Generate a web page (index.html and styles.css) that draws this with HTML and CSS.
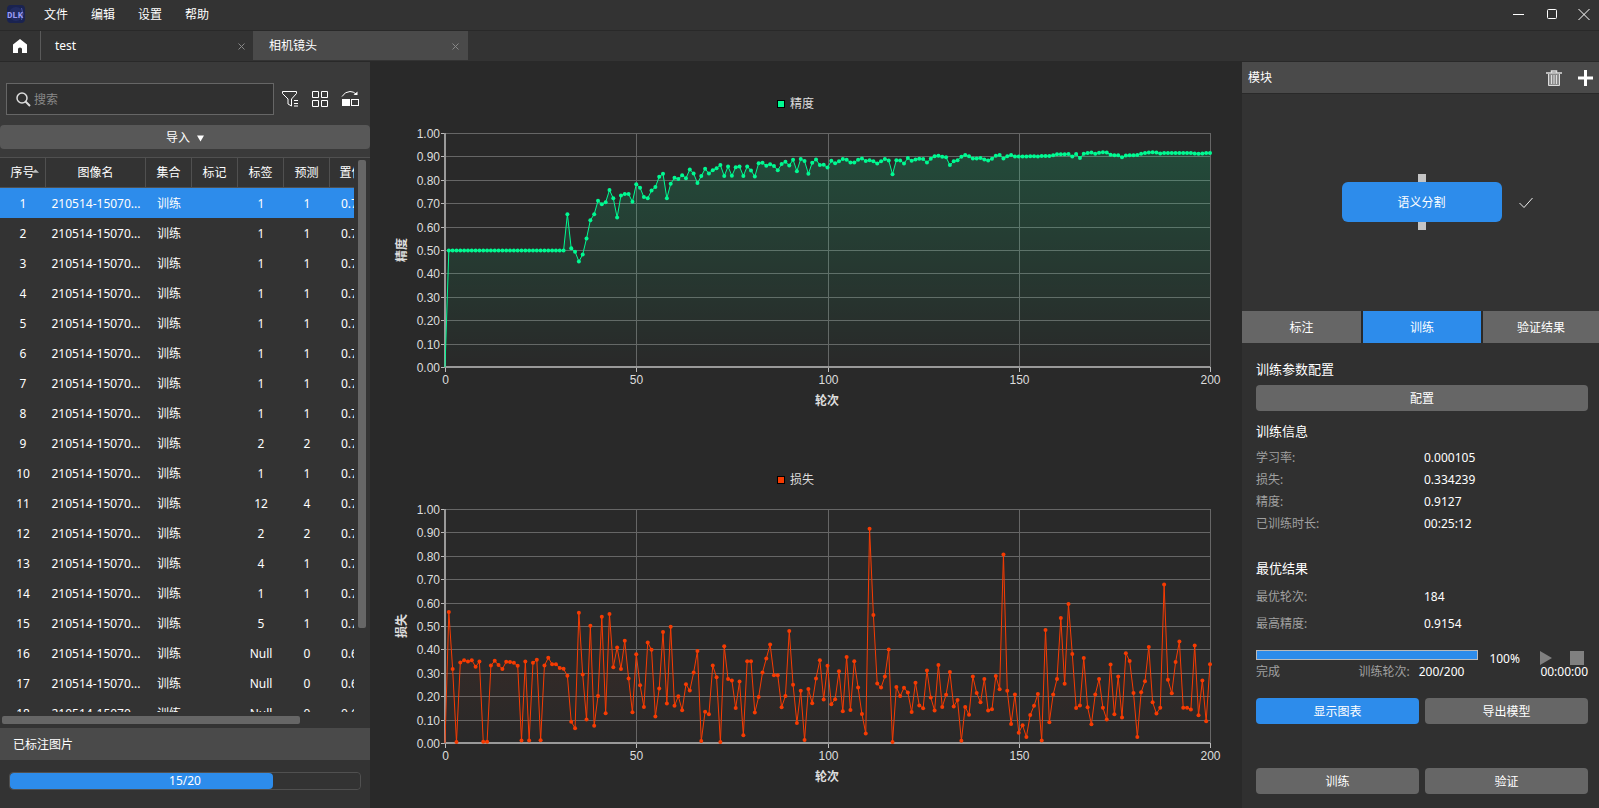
FILE: index.html
```html
<!DOCTYPE html>
<html lang="zh-CN">
<head>
<meta charset="utf-8">
<title>相机镜头</title>
<link rel="stylesheet" href="styles.css">
</head>
<body>
<div class="app">
  <header class="titlebar">
    <svg class="logo" viewBox="0 0 18 18" aria-hidden="true">
      <rect width="18" height="18" rx="4" fill="#1a2350"/>
      <ellipse cx="9" cy="9" rx="7" ry="7" fill="#222c60"/>
      <path d="M14.500 3Q17.500 9 14.500 15" fill="none" stroke="#4c55a8"/>
      <text x="8" y="13" class="logo-text">DLK</text>
    </svg>
    <nav class="menu">
      <button type="button">文件</button>
      <button type="button">编辑</button>
      <button type="button">设置</button>
      <button type="button">帮助</button>
    </nav>
    <div class="window-controls">
      <button type="button" aria-label="最小化"><svg viewBox="0 0 12 12"><path d="M0 6.500H11"/></svg></button>
      <button type="button" aria-label="最大化"><svg viewBox="0 0 12 12"><rect x="1.500" y="1.500" width="9" height="9" rx="1"/></svg></button>
      <button type="button" aria-label="关闭"><svg viewBox="0 0 12 12"><path d="M.5 1L11.500 12M11.500 1L.5 12"/></svg></button>
    </div>
  </header>

  <div class="tabs">
    <button type="button" class="home" aria-label="主页">
      <svg viewBox="0 0 14 14"><path d="M7 0L14 5.500V14H9V10Q9 8.500 7 8.500Q5 8.500 5 10V14H0V5.500Z" fill="#fff"/></svg>
    </button>
    <div class="tab"><span>test</span><button type="button" class="tab-close" aria-label="关闭 test"><svg viewBox="0 0 7 7"><path d="M.5.5L6.500 6.500M6.500.5L.5 6.500"/></svg></button></div>
    <div class="tab tab-active"><span>相机镜头</span><button type="button" class="tab-close" aria-label="关闭 相机镜头"><svg viewBox="0 0 7 7"><path d="M.5.5L6.500 6.500M6.500.5L.5 6.500"/></svg></button></div>
  </div>

  <main class="workspace">
    <aside class="left">
      <div class="list-tools">
        <div class="tool-row">
          <label class="search">
            <svg viewBox="0 0 15 15" aria-hidden="true"><circle cx="6" cy="6" r="5"/><path d="M9.500 9.500L14 14" stroke-width="2"/></svg>
            <input type="text" placeholder="搜索" aria-label="搜索">
          </label>
          <button type="button" class="tool" aria-label="筛选"><svg viewBox="0 0 18 18"><path d="M1.500 1.500H15.500V3.500L10.500 9V16L7 14V9L1.500 3.500Z"/><path d="M13 10.500H17M13 13.500H17M13 16H17"/></svg></button>
          <button type="button" class="tool" aria-label="网格"><svg viewBox="0 0 18 18"><path d="M1.500 1.500H7.500V7.500H1.500ZM10.500 1.500H16.500V7.500H10.500ZM1.500 10.500H7.500V16.500H1.500ZM10.500 10.500H16.500V16.500H10.500Z"/></svg></button>
          <button type="button" class="tool" aria-label="切换"><svg viewBox="0 0 18 18"><path d="M1 6.500Q4 1.500 9 1.500Q12.500 1.500 15 4"/><path d="M12.500 5H16.500V1.500Z" fill="#fff" stroke="none"/><rect x="1" y="9" width="8" height="7" fill="#fff" stroke="none"/><rect x="10.500" y="9.500" width="7" height="6"/></svg></button>
        </div>
        <button type="button" class="import">导入<svg viewBox="0 0 8 7" aria-hidden="true"><path d="M0 0H8L4 7Z"/></svg></button>
      </div>

      <div class="list">
        <div class="list-view">
          <table class="images">
            <colgroup><col class="c-s"><col class="c-name"><col class="c-s"><col class="c-s"><col class="c-s"><col class="c-s"><col class="c-conf"></colgroup>
            <thead><tr><th class="sorted">序号<svg viewBox="0 0 8 4" aria-hidden="true"><path d="M0 4L4 0L8 4Z"/></svg></th><th>图像名</th><th>集合</th><th>标记</th><th>标签</th><th>预测</th><th>置信度</th></tr></thead>
            <tbody id="rows"></tbody>
          </table>
        </div>
        <div class="vscroll"><div class="vthumb"></div></div>
        <div class="hscroll"><div class="hthumb"></div></div>
      </div>

      <h2 class="left-title">已标注图片</h2>
      <div class="labelled">
        <progress id="labelled" max="20" value="15" aria-label="已标注图片"></progress>
        <span>15/20</span>
      </div>
    </aside>

    <section class="charts">
      <svg class="chart" id="accuracy" role="img" aria-label="精度"></svg>
      <svg class="chart" id="loss" role="img" aria-label="损失"></svg>
    </section>

    <aside class="right">
      <div class="module-head">
        <h2>模块</h2>
        <button type="button" aria-label="删除"><svg viewBox="0 0 16 16"><path d="M0 3H16M5.500 2.500V1H10.500V2.500" stroke="#ddd" stroke-width="1.500" fill="none"/><path d="M2.500 4V15.500H13.500V4" fill="#8c8c8c" stroke="#ddd"/><path d="M5.500 5V14M8 5V14M10.500 5V14" stroke="#ddd"/></svg></button>
        <button type="button" aria-label="添加"><svg viewBox="0 0 16 16"><path d="M0 8H15M7.500 0V16" stroke="#fff" stroke-width="3"/></svg></button>
      </div>
      <div class="canvas">
        <div class="node">
          <span class="port port-in"></span>
          <button type="button">语义分割</button>
          <span class="port port-out"></span>
          <svg class="node-done" viewBox="0 0 14 12" aria-hidden="true"><path d="M.5 6L5 10.500L13.500 1"/></svg>
        </div>
      </div>
      <div class="steps">
        <button type="button">标注</button>
        <button type="button" class="primary">训练</button>
        <button type="button">验证结果</button>
      </div>

      <div class="training">
        <h3>训练参数配置</h3>
        <button type="button" class="btn btn-wide">配置</button>
        <h3 class="info-title">训练信息</h3>
        <dl class="facts">
          <dt>学习率:</dt><dd>0.000105</dd>
          <dt>损失:</dt><dd>0.334239</dd>
          <dt>精度:</dt><dd>0.9127</dd>
          <dt>已训练时长:</dt><dd>00:25:12</dd>
        </dl>
        <h3 class="best-title">最优结果</h3>
        <dl class="facts facts-loose">
          <dt>最优轮次:</dt><dd>184</dd>
          <dt>最高精度:</dt><dd>0.9154</dd>
        </dl>
        <div class="run">
          <div class="run-main">
            <progress max="200" value="200" aria-label="训练进度"></progress>
            <div class="run-text"><span class="muted">完成</span><span class="rounds"><span class="muted">训练轮次:</span><span>200/200</span></span></div>
          </div>
          <span class="percent">100%</span>
          <div class="run-side">
            <div class="run-icons">
              <button type="button" aria-label="开始"><svg viewBox="0 0 14 14"><path d="M0 0L12 7L0 14Z"/></svg></button>
              <button type="button" aria-label="停止"><svg viewBox="0 0 14 14"><path d="M0 0H14V14H0Z"/></svg></button>
            </div>
            <span class="clock">00:00:00</span>
          </div>
        </div>
        <div class="pair">
          <button type="button" class="btn primary">显示图表</button>
          <button type="button" class="btn">导出模型</button>
        </div>
        <div class="pair pair-bottom">
          <button type="button" class="btn">训练</button>
          <button type="button" class="btn">验证</button>
        </div>
      </div>
    </aside>
  </main>
</div>
<script src="app.js"></script>
</body>
</html>
```
FILE: styles.css
```css
* { box-sizing: border-box; }

body {
  margin: 0;
  background: #292929;
  color: #fff;
  font: 12px/18px "Noto Sans", "Noto Sans CJK SC", sans-serif;
}

button {
  margin: 0;
  padding: 0;
  border: 0;
  background: none;
  color: inherit;
  font: inherit;
}

h2, h3, dl, dd { margin: 0; font-weight: 400; }
svg { display: block; }

.app {
  display: flex;
  flex-direction: column;
  height: 100vh;
}

/* Title bar */
.titlebar {
  display: flex;
  align-items: center;
  height: 31px;
  padding: 0 9px 2px 7px;
  background: #333;
  border-bottom: 1px solid #292929;
}

.logo { width: 18px; height: 18px; }
.logo-text {
  fill: #9a9cf5;
  font: bold 9px "Liberation Mono", monospace;
  text-anchor: middle;
}

.menu { display: flex; gap: 23px; margin-left: 19px; padding-top: 2px; }

.window-controls { display: flex; gap: 20px; margin-left: auto; }
.window-controls button:first-child { margin-right: 1px; }
.window-controls svg { width: 12px; height: 12px; fill: none; stroke: #fff; }

/* Document tabs */
.tabs {
  display: flex;
  height: 31px;
  padding-bottom: 1px;
  background: #333;
  border-bottom: 1px solid #292929;
}

.home {
  display: grid;
  place-items: center;
  width: 41px;
  border-right: 1px solid #5a5a5a;
}
.home svg { width: 14px; height: 14px; }

.tab {
  display: flex;
  align-items: center;
  justify-content: space-between;
  width: 212px;
  padding: 0 8px 0 14px;
}
.tab-active { width: 215px; padding: 0 9px 0 16px; background: #4a4a4a; }
.tab-close { padding-top: 1px; }
.tab-close svg { width: 7px; height: 7px; fill: none; stroke: #888; }

.workspace {
  display: grid;
  grid-template-columns: 370px 1fr 357px;
  flex: 1;
  min-height: 0;
}

/* Image list */
.left {
  display: flex;
  flex-direction: column;
  min-height: 0;
  background: #333;
}

.list-tools { padding: 21px 0 8px; background: #3a3a3a; }

.tool-row {
  display: flex;
  align-items: center;
  gap: 12px;
  padding: 0 11px 0 6px;
}

.search {
  display: flex;
  align-items: center;
  gap: 3px;
  flex: 1;
  height: 32px;
  margin-right: -5px;
  padding: 0 9px;
  background: #303030;
  border: 1px solid #666;
}
.search svg { width: 15px; height: 15px; fill: none; stroke: #ddd; stroke-width: 1.5; }
.search input {
  flex: 1;
  min-width: 0;
  padding: 2px 0 0;
  border: 0;
  outline: 0;
  background: none;
  color: #fff;
  font: inherit;
}
.search input::placeholder { color: #888; opacity: 1; }

.tool svg { width: 18px; height: 18px; fill: none; stroke: #fff; }

.import {
  display: flex;
  align-items: center;
  justify-content: center;
  gap: 7px;
  width: 100%;
  height: 24px;
  margin-top: 10px;
  padding-top: 2px;
  background: #585858;
  border-radius: 4px;
}
.import svg { width: 7px; height: 7px; fill: #fff; }

.list {
  display: grid;
  grid-template-columns: 1fr 16px;
  grid-template-rows: 1fr 16px;
  flex: 1;
  min-height: 0;
  border-top: 1px solid #505050;
}

.list-view { min-width: 0; min-height: 0; overflow: hidden; }

.images {
  width: 386px;
  table-layout: fixed;
  border-collapse: separate;
  border-spacing: 0;
  text-align: center;
}
.c-s { width: 46px; }
.c-name { width: 100px; }
.c-conf { width: 56px; }
.images th, .images td { height: 30px; padding: 0; font-weight: 400; }
.images th { border-right: 1px solid #505050; border-bottom: 1px solid #505050; }
.images td { padding-top: 2px; }
.images td:last-child { padding-left: 11px; text-align: left; }
.images .selected { background: #2d8ceb; }
.images .sorted { position: relative; }
.sorted svg { position: absolute; left: 32px; top: 11px; width: 7px; height: 4px; fill: #bbb; }

.vscroll { padding: 2px 4px; }
.vthumb { width: 8px; height: 85%; background: #666; border-radius: 2px; }
.hscroll { padding: 4px 2px; }
.hthumb { width: 85%; height: 8px; background: #666; border-radius: 2px; }

.left-title {
  padding: 8px 13px 6px;
  background: #4a4a4a;
  font-size: 12px;
  line-height: 18px;
}

.labelled {
  display: grid;
  padding: 12px 9px 18px;
}
.labelled progress, .labelled span { grid-area: 1 / 1; }
.labelled span { text-align: center; z-index: 1; }

progress {
  display: block;
  appearance: none;
  width: 100%;
}
.labelled progress { height: 18px; border: 1px solid #505050; border-radius: 4px; }
.labelled progress::-webkit-progress-bar { background: #333; border-radius: 4px; }
.labelled progress::-webkit-progress-value { background: #2d8ceb; border-radius: 4px; }

/* Charts */
.charts {
  display: grid;
  grid-template-rows: 1fr 1fr;
  gap: 6px;
  min-width: 0;
  min-height: 0;
}
.chart { width: 100%; height: 100%; font: 12px "Liberation Sans", "Noto Sans CJK SC", sans-serif; }
.chart text { fill: #ddd; }
.chart .axis-title { font-weight: 700; }
.chart .grid { stroke: #666; }
.chart .axis { stroke: #999; stroke-width: 2; }
.chart .tick { stroke: #bbb; }
.chart .line { fill: none; }
.accuracy-line { stroke: #00fa92; }
.accuracy-dot { fill: #00fa92; }
.loss-line { stroke: #f63b02; }
.loss-dot { fill: #f63b02; }
.legend-mark { stroke: #000; }

/* Module panel */
.right {
  display: flex;
  flex-direction: column;
  min-height: 0;
  background: #303030;
}

.module-head {
  display: flex;
  align-items: center;
  gap: 16px;
  height: 32px;
  padding: 0 5px 0 6px;
  background: #4a4a4a;
  border-bottom: 1px solid #292929;
}
.module-head h2 { flex: 1; font-size: 12px; line-height: 18px; }
.module-head svg { width: 16px; height: 16px; }

.canvas {
  display: grid;
  place-items: center;
  height: 217px;
  padding: 0 0 2px 2px;
  background: #333;
}
.node { position: relative; width: 160px; }
.node button {
  display: block;
  width: 100%;
  height: 40px;
  padding-top: 2px;
  background: #2d8ceb;
  border-radius: 6px;
}
.port { position: absolute; left: 76px; width: 8px; height: 8px; background: #c4c4c4; }
.port-in { top: -8px; }
.port-out { bottom: -8px; }
.node-done { position: absolute; left: 177px; top: 15px; width: 14px; height: 12px; fill: none; stroke: #eee; }

.steps { display: grid; grid-template-columns: 119px 118px 1fr; gap: 2px; background: #292929; }
.steps button { height: 32px; padding-top: 2px; background: #666; }
.steps .primary { background: #2d8ceb; }

.training {
  display: flex;
  flex-direction: column;
  flex: 1;
  padding: 15px 11px 14px 14px;
}
.training h3 { font-size: 13px; line-height: 22px; }
.training .info-title { margin-top: 9px; }
.training .best-title { margin-top: 22px; }

.btn { height: 26px; padding-top: 2px; background: #666; border-radius: 4px; }
.btn.primary { background: #2d8ceb; }
.btn-wide { margin-top: 5px; }

.facts {
  display: grid;
  grid-template-columns: 168px 1fr;
  margin-top: 5px;
  line-height: 22px;
}
.facts-loose { margin-top: 4px; line-height: 27px; }
.facts dt, .muted { color: #a0a0a0; }

.run { display: flex; margin-top: 13px; line-height: 22px; }
.run-main { flex: 1; }
.run-main progress { height: 10px; border: 1px solid #bbb; }
.run-main progress::-webkit-progress-bar { background: #303030; }
.run-main progress::-webkit-progress-value { background: #2d8ceb; }
.run-text { display: flex; justify-content: space-between; padding: 1px 14px 0 0; }
.rounds { display: flex; gap: 9px; }
.percent { width: 51px; margin-left: 11px; line-height: 18px; }
.run-side { display: flex; flex-direction: column; }
.run-icons { display: flex; justify-content: space-between; height: 11px; padding: 1px 4px 0 0; }
.run-icons button { height: 14px; }
.run-icons svg { width: 14px; height: 14px; fill: #808080; }

.pair { display: grid; grid-template-columns: 1fr 1fr; gap: 6px; margin-top: 15px; }
.pair-bottom { margin-top: auto; }
```
FILE: app.js
```js
const labels = ["1", "1", "1", "1", "1", "1", "1", "1", "2", "1", "12", "2", "4", "1", "5", "Null", "Null", "Null"];
const predictions = [1, 1, 1, 1, 1, 1, 1, 1, 2, 1, 4, 2, 1, 1, 1, 0, 0, 0];

document.getElementById("rows").innerHTML = labels.map((label, i) => `
  <tr${i === 0 ? ' class="selected"' : ""}><td>${i + 1}</td><td>210514-15070...</td><td>训练</td><td></td>
  <td>${label}</td><td>${predictions[i]}</td><td>${i < 15 ? "0.7" : "0.6"}</td></tr>`).join("");

// Values per training round, in thousandths.
const accuracy = [0, ...Array(31).fill(498),
  653, 507, 493, 451, 481, 549, 627, 653, 710, 696, 704, 756, 721, 639, 733, 739, 739, 706,
  781, 766, 726, 721, 754, 769, 813, 826, 721, 783, 809, 803, 819, 807, 844, 827, 786, 816, 847, 827,
  841, 849, 863, 816, 857, 817, 854, 857, 816, 857, 840, 814, 871, 873, 860, 866, 859, 841, 867, 877,
  861, 886, 837, 889, 880, 826, 873, 887, 863, 864, 853, 881, 871, 879, 889, 886, 874, 874, 886, 891,
  880, 884, 879, 870, 879, 889, 883, 824, 884, 883, 870, 893, 881, 887, 890, 889, 874, 890, 901, 903,
  899, 896, 863, 879, 884, 899, 906, 901, 891, 891, 893, 887, 883, 890, 903, 906, 891, 901, 906, 900,
  900, 900, 900, 901, 901, 900, 902, 902, 902, 905, 909, 909, 909, 910, 900, 910, 893, 911, 914, 917,
  911, 916, 918, 917, 907, 905, 905, 896, 904, 905, 905, 906, 911, 914, 917, 918, 917, 912, 914, 914,
  915, 915, 915, 915, 915, 915, 912, 911, 912, 914, 914, 915, 915];

const loss = [0, 560, 316, 4, 344, 354, 348, 354, 326, 348, 5, 5, 331, 351, 333, 316, 347, 346, 343, 330,
  11, 348, 11, 343, 356, 12, 331, 364, 337, 337, 320, 317, 287, 91, 63, 557, 293, 100, 501, 74,
  201, 540, 127, 551, 324, 408, 316, 437, 276, 131, 379, 247, 154, 430, 398, 113, 233, 474, 169, 497,
  159, 200, 140, 251, 224, 301, 393, 9, 134, 123, 331, 281, 4, 413, 273, 267, 150, 263, 33, 349,
  349, 130, 197, 301, 361, 421, 290, 290, 153, 201, 479, 249, 86, 223, 13, 231, 170, 276, 354, 186,
  330, 166, 187, 307, 136, 367, 141, 349, 237, 124, 41, 916, 547, 254, 237, 284, 400, 4, 239, 201,
  236, 216, 133, 257, 160, 149, 310, 194, 139, 333, 154, 206, 303, 156, 184, 10, 154, 121, 284, 214,
  174, 274, 139, 144, 286, 230, 806, 223, 81, 207, 44, 76, 26, 120, 159, 209, 11, 483, 89, 207,
  274, 534, 253, 594, 380, 150, 160, 363, 153, 80, 207, 274, 151, 100, 336, 123, 284, 109, 384, 350,
  214, 26, 217, 264, 410, 174, 126, 151, 677, 270, 213, 346, 434, 151, 151, 143, 417, 119, 267, 93, 337];

function draw(id, name, values, color, opacity) {
  const svg = document.getElementById(id);
  const { width, height } = svg.getBoundingClientRect();
  const left = 75, top = 71, right = Math.round(width) - 32, bottom = Math.round(height) - 65;
  const x = n => left + (right - left) * n / 200;
  const y = v => bottom - (bottom - top) * v;
  const snap = p => Math.round(p) + 0.5;
  const points = values.slice(0, 201).map((v, n) => [x(n), y(v / 1000)]);
  const path = points.map(p => p.map(c => c.toFixed(2)).join(" ")).join("L");
  const mid = Math.floor((left + right) / 2);
  let out = `<defs><linearGradient id="${id}-fill" gradientUnits="userSpaceOnUse" x1="0" x2="0" y1="${y(Math.max(...values) / 1000)}" y2="${bottom}">
    <stop stop-color="${color}" stop-opacity="${opacity}"/><stop offset="1" stop-color="${color}" stop-opacity="0"/></linearGradient></defs>`;

  for (let i = 0; i <= 10; i++) {
    const gy = snap(y(i / 10));
    if (i) out += `<line class="grid" x1="${left}" x2="${right}" y1="${gy}" y2="${gy}"/>`;
    out += `<line class="tick" x1="${left - 4}" x2="${left}" y1="${gy}" y2="${gy}"/>
      <text x="${left - 5}" y="${Math.round(gy) + 4}" text-anchor="end">${(i / 10).toFixed(2)}</text>`;
  }
  for (let n = 0; n <= 200; n += 50) {
    const gx = snap(x(n));
    if (n) out += `<line class="grid" x1="${gx}" x2="${gx}" y1="${top}" y2="${bottom}"/>`;
    out += `<line class="tick" x1="${gx}" x2="${gx}" y1="${bottom}" y2="${bottom + 5}"/>
      <text x="${gx}" y="${bottom + 17}" text-anchor="middle">${n}</text>`;
  }
  out += `<path d="M${left} ${bottom}H${right}M${left} ${top}V${bottom + 1}" class="axis"/>
    <path d="M${left} ${bottom}L${path}V${bottom}Z" fill="url(#${id}-fill)"/>
    <path d="M${path}" class="line ${id}-line"/>`;
  out += points.slice(1).map(p => `<circle class="${id}-dot" cx="${p[0].toFixed(2)}" cy="${p[1].toFixed(2)}" r="2"/>`).join("");
  out += `<rect x="${mid - 49.5}" y="38.500" width="7" height="7" class="legend-mark ${id}-dot"/>
    <text x="${mid - 37}" y="46">${name}</text>
    <text class="axis-title" x="${mid}" y="${bottom + 38}" text-anchor="middle">轮次</text>
    <text class="axis-title" text-anchor="middle" transform="translate(36 ${(top + bottom) / 2}) rotate(-90)">${name}</text>`;
  svg.innerHTML = out;
}

function drawAll() {
  draw("accuracy", "精度", accuracy, "#00fa92", 0.16);
  draw("loss", "损失", loss, "#f63b02", 0.13);
}

drawAll();
window.addEventListener("resize", drawAll);
```
